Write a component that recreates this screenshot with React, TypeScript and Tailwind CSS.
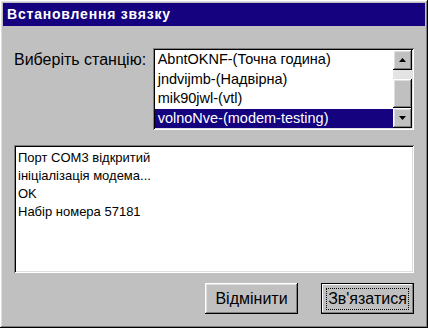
const stations = [
  "AbntOKNF-(Точна година)",
  "jndvijmb-(Надвірна)",
  "mik90jwl-(vtl)",
  "volnoNve-(modem-testing)",
];

const logLines = [
  "Порт COM3 відкритий",
  "ініціалізація модема...",
  "OK",
  "Набір номера 57181",
];

const raised =
  "shadow-[inset_-1px_-1px_#000,inset_1px_1px_#fff,inset_-2px_-2px_#808080,inset_2px_2px_#dfdfdf]";
const sunken =
  "shadow-[inset_1px_1px_#808080,inset_-1px_-1px_#fff,inset_2px_2px_#000,inset_-2px_-2px_#dfdfdf]";

function Arrow({ up }: { up?: boolean }) {
  return (
    <svg width="7" height="4" viewBox="0 0 7 4">
      <path d={up ? "M3.5 0 L7 4 L0 4 Z" : "M0 0 L7 0 L3.5 4 Z"} fill="#000" />
    </svg>
  );
}

function ScrollBar() {
  return (
    <div className="w-[19px] flex flex-col bg-[#e4e4e4]">
      <div className={`h-[20px] bg-[#c0c0c0] flex items-center justify-center ${raised}`}>
        <Arrow up />
      </div>
      <div className="h-[9px]" />
      <div className={`flex-1 bg-[#c0c0c0] ${raised}`} />
      <div className={`h-[20px] bg-[#c0c0c0] flex items-center justify-center ${raised}`}>
        <Arrow />
      </div>
    </div>
  );
}

export default function App() {
  return (
    <div
      className={`w-[428px] h-[328px] bg-[#c0c0c0] p-[3px] flex flex-col font-['Liberation_Sans',Arial,sans-serif] text-black ${raised}`}
    >
      <div className="h-[23px] bg-[#14027e] flex items-center pl-[4px]">
        <span className="text-white font-bold text-[14px] tracking-[0.8px]">Встановлення звязку</span>
      </div>

      <div className="flex-1 flex flex-col px-[11px] pt-[22px]">
        <div className="flex items-start">
          <span className="text-[16px] leading-[18px] mt-[3px] w-[139px]">Виберіть станцію:</span>
          <div className={`w-[262px] h-[82px] bg-white p-[2px] flex ${sunken}`}>
            <ul className="flex-1 flex flex-col">
              {stations.map((s, i) => (
                <li
                  key={i}
                  className={`h-[19.5px] leading-[19px] text-[14.5px] pl-[3px] whitespace-nowrap ${
                    i === 3 ? "bg-[#14027e] text-white" : ""
                  }`}
                >
                  {s}
                </li>
              ))}
            </ul>
            <ScrollBar />
          </div>
        </div>

        <div className={`mt-[15px] h-[128px] bg-white pt-[4px] pl-[4px] ${sunken}`}>
          {logLines.map((l, i) => (
            <div key={i} className="text-[13px] leading-[18px]">
              {l}
            </div>
          ))}
        </div>

        <div className="flex justify-end gap-[23px] mt-[10px]">
          <button className={`w-[93px] h-[31px] bg-[#c0c0c0] text-[16px] ${raised}`}>Відмінити</button>
          <button
            className={`w-[93px] h-[31px] bg-[#c0c0c0] text-[16px] border border-black flex items-center justify-center shadow-[inset_-1px_-1px_#808080,inset_1px_1px_#fff]`}
          >
            <span className="border border-dotted border-black px-[1px] leading-[20px]">Зв'язатися</span>
          </button>
        </div>
      </div>
    </div>
  );
}
